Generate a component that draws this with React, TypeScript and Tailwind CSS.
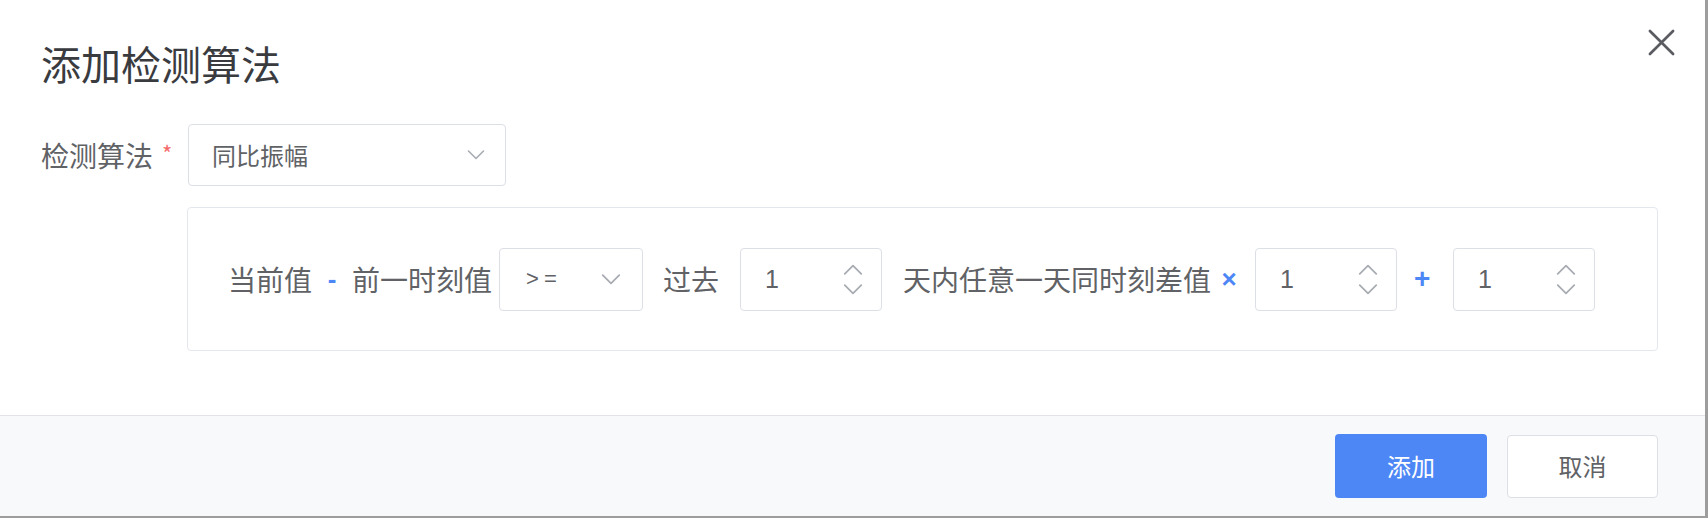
import React from 'react';

const font = { fontFamily: '"Noto Sans CJK SC", "Noto Sans", sans-serif' };

function Chevron({ up = false, w = 18, h = 10 }: { up?: boolean; w?: number; h?: number }) {
    return (
        <svg width={w} height={h} viewBox="0 0 18 10" fill="none">
            <path
                d={up ? 'M1.5 9 L9 1.5 L16.5 9' : 'M1.5 1 L9 8.5 L16.5 1'}
                stroke="#a8abb2"
                strokeWidth="1.6"
                strokeLinecap="round"
                strokeLinejoin="round"
            />
        </svg>
    );
}

function NumberInput({ value }: { value: string }) {
    return (
        <div className="w-[142px] h-[63px] border border-[#dcdfe6] rounded-[4px] bg-white flex items-center justify-between pl-[24px] pr-[18px]">
            <span className="text-[25px] text-[#606266] leading-none" style={{ fontFamily: '"Liberation Sans", sans-serif' }}>{value}</span>
            <div className="flex flex-col items-center gap-[9px]">
                <Chevron up w={20} h={11} />
                <Chevron w={20} h={11} />
            </div>
        </div>
    );
}

function App() {
    return (
        <div className="w-[1708px] h-[518px] bg-white border-r-[3px] border-b-[2px] border-[#9d9d9d] flex flex-col relative" style={font}>
            <button className="absolute top-[29px] right-[30px] w-[27px] h-[27px] flex items-center justify-center">
                <svg width="27" height="27" viewBox="0 0 28 28" fill="none">
                    <path d="M2 2 L26 26 M26 2 L2 26" stroke="#5a5c61" strokeWidth="2.8" strokeLinecap="round" />
                </svg>
            </button>

            <div className="flex-1">
                <h1 className="pl-[41px] mt-[43px] h-[40px] leading-[40px] text-[40px] text-[#3a3b3f] font-normal">添加检测算法</h1>

                <div className="flex items-center mt-[41px]">
                    <div className="w-[188px] pl-[41px] flex items-center">
                        <span className="text-[28px] text-[#606266] leading-none">检测算法</span>
                        <span className="ml-[9px] text-[22px] text-[#f56c6c] leading-none -mt-[6px]">*</span>
                    </div>
                    <div className="w-[318px] h-[62px] border border-[#dcdfe6] rounded-[4px] flex items-center justify-between pl-[23px] pr-[20px]">
                        <span className="text-[24px] text-[#606266] leading-none">同比振幅</span>
                        <Chevron />
                    </div>
                </div>

                <div className="ml-[187px] mt-[21px] w-[1471px] h-[144px] border border-[#e4e7ed] rounded-[4px] flex items-center pl-[40px] text-[28px] text-[#606266]">
                    <span className="leading-none">当前值</span>
                    <span className="w-[40px] text-center text-[26px] font-bold text-[#4d87f6] leading-none" style={{ fontFamily: '"Liberation Sans", sans-serif' }}>-</span>
                    <span className="leading-none">前一时刻值</span>
                    <div className="ml-[7px] w-[144px] h-[63px] border border-[#dcdfe6] rounded-[4px] flex items-center justify-between pl-[26px] pr-[21px]">
                        <span className="text-[22px] text-[#606266] leading-none tracking-[5px]" style={{ fontFamily: '"Liberation Sans", sans-serif' }}>&gt;=</span>
                        <Chevron w={20} h={11} />
                    </div>
                    <span className="ml-[20px] leading-none">过去</span>
                    <div className="ml-[21px]">
                        <NumberInput value="1" />
                    </div>
                    <span className="ml-[21px] leading-none">天内任意一天同时刻差值</span>
                    <span className="w-[44px] flex justify-center pr-[8px] text-[26px] font-bold text-[#4d87f6] leading-none" style={{ fontFamily: '"Liberation Sans", sans-serif' }}>×</span>
                    <NumberInput value="1" />
                    <span className="w-[56px] flex justify-center pr-[6px] text-[28px] font-bold text-[#4d87f6] leading-none" style={{ fontFamily: '"Liberation Sans", sans-serif' }}>+</span>
                    <NumberInput value="1" />
                </div>
            </div>

            <div className="h-[101px] border-t border-[#e1e3e8] bg-[#f8f9fb] flex items-center justify-end gap-[20px] pr-[47px]">
                <button className="w-[152px] h-[64px] rounded-[4px] bg-[#4d87f6] text-white text-[24px]">添加</button>
                <button className="w-[151px] h-[63px] rounded-[4px] bg-white border border-[#dcdfe6] text-[#606266] text-[24px]">取消</button>
            </div>
        </div>
    );
}

export default App;
